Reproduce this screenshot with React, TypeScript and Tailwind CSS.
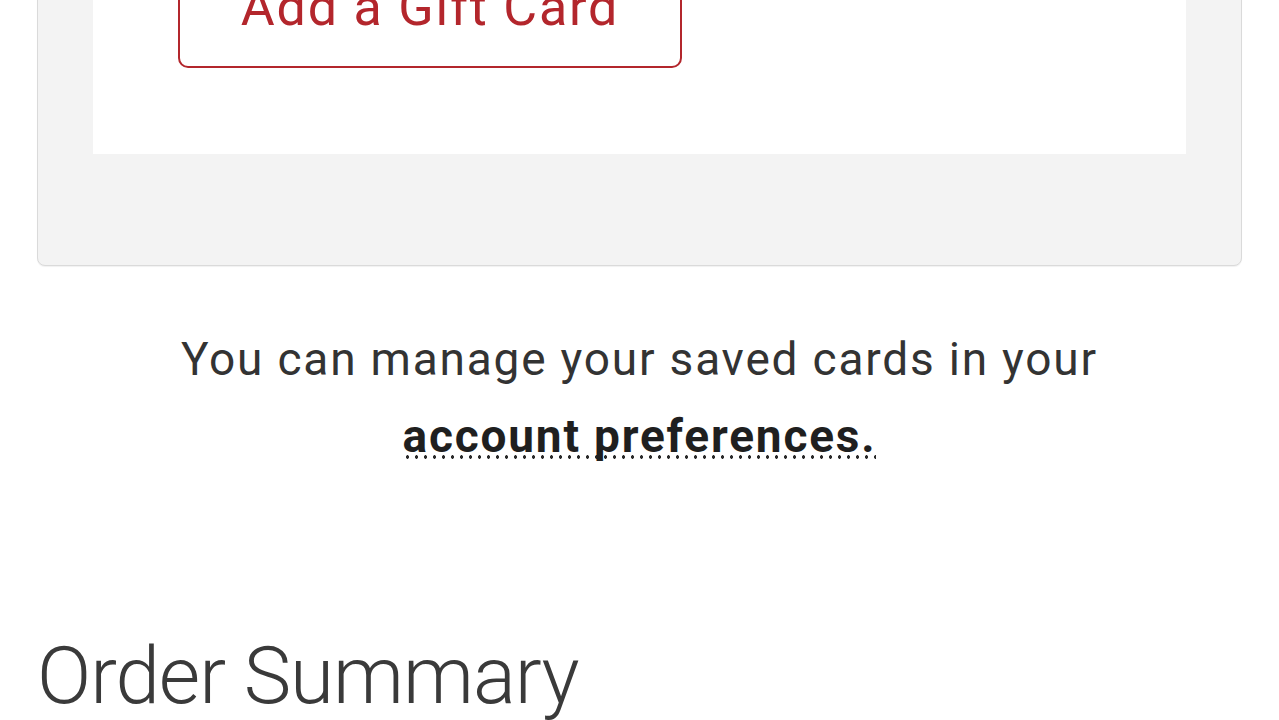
import React from 'react'

const App = () => {
    return (
        <div className="h-[720px] w-full overflow-hidden bg-white font-['Roboto',sans-serif]">
            <section className="mx-[37px] -mt-[60px] rounded-lg border border-[#dadada] bg-[#f3f3f3] pb-[111px] shadow-[0_1px_1px_rgba(0,0,0,0.06)]">
                <div className="mx-[55px] bg-white pt-[20px] pb-[86px]">
                    <button className="ml-[85px] flex h-[107px] w-[504px] items-center justify-center rounded-[10px] border-2 border-[#b3262c] pb-[13px] text-[52px] tracking-[1.8px] text-[#b3262c]">
                        Add a Gift Card
                    </button>
                </div>
            </section>

            <p className="mt-[55px] text-center text-[46px] leading-[77px] tracking-[1.8px] text-[#333]">
                You can manage your saved cards in your
                <br />
                <a className="bg-[radial-gradient(circle,#2a2a2a_1.6px,transparent_1.9px)] bg-[length:9px_4px] bg-[position:left_0_bottom_4px] bg-repeat-x font-bold text-[#1f1f1f]">
                    account preferences.
                </a>
            </p>

            <h1 className="mt-[161px] pl-[37px] text-[80px] font-light leading-none tracking-[-1px] text-[#3a3a3a]">
                Order Summary
            </h1>
        </div>
    )
}

export default App
